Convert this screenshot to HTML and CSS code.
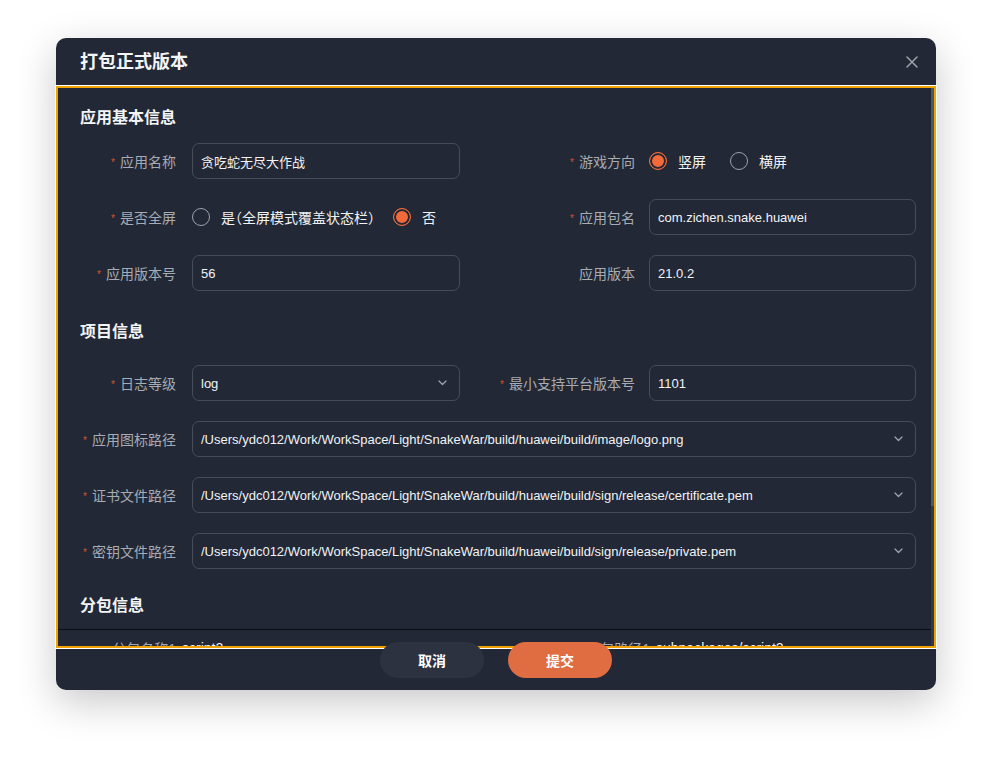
FILE: index.html
```html
<!DOCTYPE html>
<html lang="zh-CN">
<head>
<meta charset="utf-8">
<title>打包正式版本</title>
<link rel="stylesheet" href="styles.css">
</head>
<body>
<div class="modal">
  <div class="header">
    <div class="title">打包正式版本</div>
    <svg class="close" width="12" height="12" viewBox="0 0 12 12"><path d="M1 1L11 11M11 1L1 11" stroke="#9ea2a9" stroke-width="1.5" stroke-linecap="round"/></svg>
  </div>
  <div class="scroll">
    <div class="scroll-content">
      <div class="section first">
        <div class="section-title">应用基本信息</div>
        <div class="grid g1">
          <div class="field">
            <div class="label"><span class="star">*</span>应用名称</div>
            <div class="input">贪吃蛇无尽大作战</div>
          </div>
          <div class="field right">
            <div class="label"><span class="star">*</span>游戏方向</div>
            <div class="radio-group">
              <div class="radio-item"><span class="radio checked"></span><span class="radio-text">竖屏</span></div>
              <div class="radio-item"><span class="radio"></span><span class="radio-text">横屏</span></div>
            </div>
          </div>
          <div class="field">
            <div class="label"><span class="star">*</span>是否全屏</div>
            <div class="radio-group tight">
              <div class="radio-item"><span class="radio"></span><span class="radio-text halt">是（全屏模式覆盖状态栏）</span></div>
              <div class="radio-item"><span class="radio checked"></span><span class="radio-text">否</span></div>
            </div>
          </div>
          <div class="field right">
            <div class="label"><span class="star">*</span>应用包名</div>
            <div class="input">com.zichen.snake.huawei</div>
          </div>
          <div class="field">
            <div class="label"><span class="star">*</span>应用版本号</div>
            <div class="input">56</div>
          </div>
          <div class="field right">
            <div class="label">应用版本</div>
            <div class="input">21.0.2</div>
          </div>
        </div>
      </div>

      <div class="section second">
        <div class="section-title">项目信息</div>
        <div class="grid g2">
          <div class="field">
            <div class="label"><span class="star">*</span>日志等级</div>
            <div class="input select"><span class="value">log</span><svg class="chev" width="9" height="6" viewBox="0 0 9 6"><path d="M1 1L4.5 4.5L8 1" fill="none" stroke="#a3a7ae" stroke-width="1.2" stroke-linecap="round" stroke-linejoin="round"/></svg></div>
          </div>
          <div class="field right">
            <div class="label"><span class="star">*</span>最小支持平台版本号</div>
            <div class="input">1101</div>
          </div>
          <div class="field span2">
            <div class="label"><span class="star">*</span>应用图标路径</div>
            <div class="input select"><span class="value">/Users/ydc012/Work/WorkSpace/Light/SnakeWar/build/huawei/build/image/logo.png</span><svg class="chev" width="9" height="6" viewBox="0 0 9 6"><path d="M1 1L4.5 4.5L8 1" fill="none" stroke="#a3a7ae" stroke-width="1.2" stroke-linecap="round" stroke-linejoin="round"/></svg></div>
          </div>
          <div class="field span2">
            <div class="label"><span class="star">*</span>证书文件路径</div>
            <div class="input select"><span class="value">/Users/ydc012/Work/WorkSpace/Light/SnakeWar/build/huawei/build/sign/release/certificate.pem</span><svg class="chev" width="9" height="6" viewBox="0 0 9 6"><path d="M1 1L4.5 4.5L8 1" fill="none" stroke="#a3a7ae" stroke-width="1.2" stroke-linecap="round" stroke-linejoin="round"/></svg></div>
          </div>
          <div class="field span2">
            <div class="label"><span class="star">*</span>密钥文件路径</div>
            <div class="input select"><span class="value">/Users/ydc012/Work/WorkSpace/Light/SnakeWar/build/huawei/build/sign/release/private.pem</span><svg class="chev" width="9" height="6" viewBox="0 0 9 6"><path d="M1 1L4.5 4.5L8 1" fill="none" stroke="#a3a7ae" stroke-width="1.2" stroke-linecap="round" stroke-linejoin="round"/></svg></div>
          </div>
        </div>
      </div>

      <div class="section third">
        <div class="section-title">分包信息</div>
      </div>
      <div class="subpkg">
        <div class="sub-item"><span class="sub-label">分包名称1</span><span class="sub-value">script2</span></div>
        <div class="sub-item right"><span class="sub-label">分包路径1</span><span class="sub-value">subpackages/script2</span></div>
      </div>
    </div>
    <div class="scrollbar"><div class="thumb"></div></div>
  </div>
  <div class="footer">
    <button class="btn cancel">取消</button>
    <button class="btn submit">提交</button>
  </div>
</div>
</body>
</html>
```

FILE: styles.css
```css
* { box-sizing: border-box; }

html, body {
  margin: 0;
  padding: 0;
  background: #ffffff;
}

body {
  min-height: 100vh;
  padding-top: 38px;
  font-family: "Liberation Sans", "Noto Sans CJK SC", sans-serif;
  font-size: 14px;
  color: #eef0f3;
}

.modal {
  width: 880px;
  height: 652px;
  margin: 0 auto;
  background: #222835;
  border-radius: 10px;
  box-shadow: 0 12px 40px rgba(0, 0, 0, 0.22);
  display: flex;
  flex-direction: column;
}

.header {
  height: 47px;
  flex: none;
  padding: 0 18px 0 24px;
  display: flex;
  align-items: center;
  justify-content: space-between;
}

.title {
  font-size: 18px;
  font-weight: 600;
  color: #f3f4f6;
  line-height: 24px;
}

.close { display: block; }

.scroll {
  flex: none;
  height: 558px;
  margin: 3px 2px 0 2px;
  outline: 2px solid #f0a202;
  box-shadow: 0 0 0 3px #ffffff;
  overflow: hidden;
  display: flex;
}

.scroll-content {
  flex: 1;
  min-width: 0;
}

.scrollbar {
  width: 3px;
  flex: none;
  background: #333844;
}

.thumb {
  height: 418px;
  background: #50555f;
}

.section {
  padding: 0 15px 0 22px;
}

.section.first { padding-top: 18px; }
.section.second { padding-top: 29px; }
.section.third { padding-top: 25px; }

.section-title {
  font-size: 16px;
  font-weight: 600;
  line-height: 24px;
  color: #f3f4f6;
}

.grid {
  display: grid;
  grid-template-columns: 380px 380px;
  column-gap: 76px;
  row-gap: 20px;
}

.g1 { margin-top: 13px; }
.g2 { margin-top: 21px; }

.span2 { grid-column: 1 / -1; }

.field {
  display: flex;
  align-items: center;
  height: 36px;
}

.label {
  flex: none;
  width: 112px;
  padding-right: 16px;
  display: flex;
  justify-content: flex-end;
  align-items: center;
  color: #a7abb3;
  font-size: 14px;
  white-space: nowrap;
}

.field.right .label {
  width: 113px;
  padding-right: 14px;
}

.star {
  color: #d4542c;
  font-size: 10px;
  line-height: 10px;
  margin-right: 5px;
  padding-top: 4px;
}

.input {
  flex: 1;
  min-width: 0;
  height: 36px;
  border: 1px solid #474c59;
  border-radius: 7px;
  padding: 0 8px;
  display: flex;
  align-items: center;
  font-size: 13px;
  color: #f2f3f5;
  white-space: nowrap;
}

.select { justify-content: space-between; padding-right: 12px; }

.select .value {
  overflow: hidden;
  text-overflow: ellipsis;
}

.chev { flex: none; display: block; }

.radio-group {
  display: flex;
  align-items: center;
  gap: 24px;
}

.radio-group.tight { gap: 18px; }

.radio-item {
  display: flex;
  align-items: center;
  gap: 11px;
}

.radio {
  width: 18px;
  height: 18px;
  border-radius: 50%;
  border: 1.5px solid #9ea2a9;
  flex: none;
}

.radio.checked {
  border-color: #f2693a;
  background: #f2693a;
  box-shadow: inset 0 0 0 2px #222835;
}

.radio-text {
  font-size: 14px;
  color: #f1f2f4;
  white-space: nowrap;
}

.halt { font-feature-settings: "halt" 1; }

.subpkg {
  margin-top: 11px;
  border-top: 1px solid #0c0e12;
  padding: 0 15px 0 22px;
  display: grid;
  grid-template-columns: 380px 380px;
  column-gap: 76px;
}

.sub-item {
  display: flex;
  align-items: center;
  height: 36px;
  font-size: 14px;
  gap: 6px;
}

.sub-label {
  width: 96px;
  text-align: right;
  color: #a7abb3;
}

.sub-item.right .sub-label { width: 114px; }

.sub-value { color: #f1f2f4; }

.footer {
  margin-top: -4px;
  display: flex;
  justify-content: center;
  gap: 24px;
}

.btn {
  width: 104px;
  height: 36px;
  border: none;
  border-radius: 18px;
  font-family: "Liberation Sans", "Noto Sans CJK SC", sans-serif;
  font-size: 14px;
  font-weight: 600;
  color: #ffffff;
  padding: 0;
}

.cancel { background: #2d3240; }
.submit { background: #e06c42; }
```
